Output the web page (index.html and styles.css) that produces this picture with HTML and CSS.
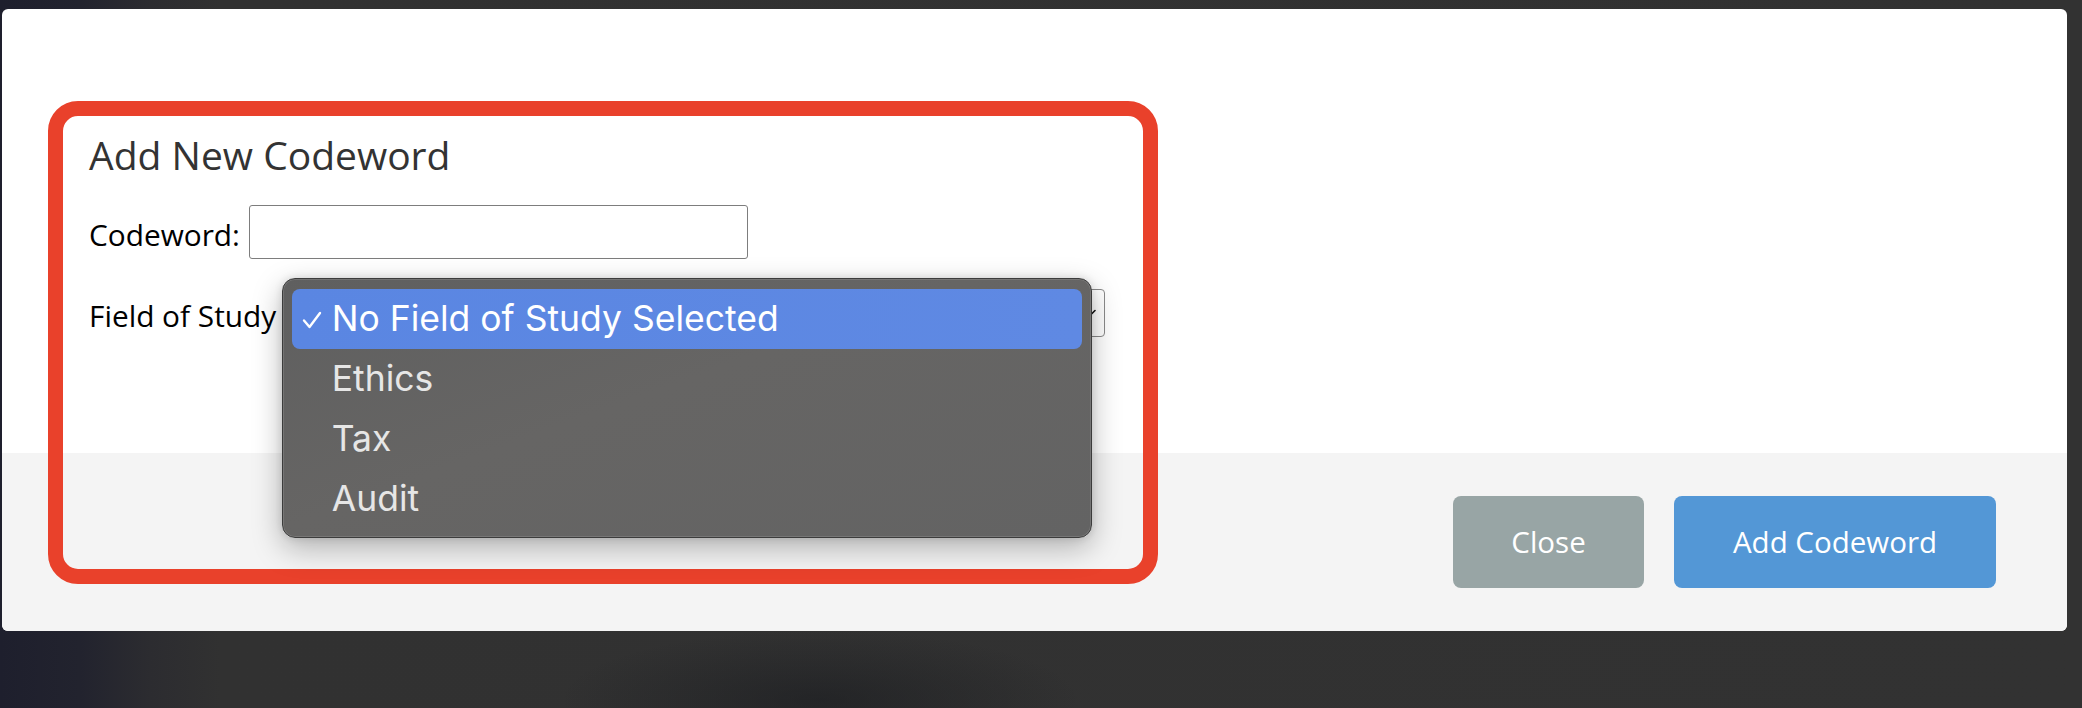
FILE: index.html
```html
<!DOCTYPE html>
<html lang="en">
<head>
<meta charset="utf-8">
<title>Add New Codeword</title>
<link rel="stylesheet" href="styles.css">
</head>
<body>
<div class="page">
  <div class="modal">
    <div class="modal-body">
      <h3 class="title">Add New Codeword</h3>
      <div class="row row-code">
        <label class="label" for="codeword">Codeword:</label>
        <input class="text-input" id="codeword" type="text">
      </div>
      <div class="row row-field">
        <label class="label">Field of Study</label>
        <div class="select">
          <svg class="chevron" width="12" height="8" viewBox="0 0 12 8"><path d="M1 1.5 L6 6.5 L11 1.5" fill="none" stroke="#111" stroke-width="1.6" stroke-linecap="round" stroke-linejoin="round"/></svg>
        </div>
      </div>
    </div>
    <div class="modal-footer">
      <button class="btn btn-close" type="button">Close</button>
      <button class="btn btn-add" type="button">Add Codeword</button>
    </div>

    <div class="annotation"></div>

    <div class="popup">
      <div class="option selected">
        <svg class="check" width="20" height="18" viewBox="0 0 20 18"><path d="M2 9.5 L7.5 16 L18 2" fill="none" stroke="#ffffff" stroke-width="2.4" stroke-linecap="round" stroke-linejoin="round"/></svg>
        <span>No Field of Study Selected</span>
      </div>
      <div class="option"><span>Ethics</span></div>
      <div class="option"><span>Tax</span></div>
      <div class="option"><span>Audit</span></div>
    </div>
  </div>
</div>
</body>
</html>
```

FILE: styles.css
```css
* { box-sizing: border-box; }

html, body {
  margin: 0;
  height: 100%;
}

body {
  background:
    radial-gradient(ellipse 260px 70px at 820px 700px, rgba(24,26,30,0.55), rgba(24,26,30,0) 100%),
    linear-gradient(90deg, #1e1f2d 0px, #22232e 80px, #2c2c30 150px, #313131 220px, #323232 100%);
  font-family: "Open Sans", "Noto Sans", sans-serif;
  overflow: hidden;
}

.page {
  padding: 9px 15px 0 2px;
}

.modal {
  position: relative;
  width: 2065px;
  background: #ffffff;
  border-radius: 6px;
}

.modal-body {
  padding: 121.6px 0 116px 87px;
}

.title {
  margin: 0;
  font-size: 39px;
  line-height: 47px;
  font-weight: 400;
  color: #333333;
}

.row {
  display: flex;
  align-items: center;
}

.row-code {
  margin-top: 27.4px;
  height: 54px;
}

.row-field {
  margin-top: 30px;
  height: 48px;
}

.label {
  font-size: 29.8px;
  line-height: 40px;
  padding-top: 6px;
  color: #000000;
}

.text-input {
  margin-left: 9px;
  width: 499px;
  height: 54px;
  border: 1px solid #7d7d7d;
  border-radius: 3px;
  background: #ffffff;
  font: inherit;
}

.select {
  margin-left: 14px;
  flex: 0 0 815px;
  height: 48px;
  border: 1px solid #8a8a8a;
  border-radius: 4px;
  background: #ffffff;
  display: flex;
  align-items: center;
  justify-content: flex-end;
  padding: 0 8px 0 12px;
}

.modal-footer {
  height: 178px;
  background: #f4f4f4;
  border-radius: 0 0 6px 6px;
  display: flex;
  justify-content: flex-end;
  align-items: center;
  gap: 30px;
  padding-right: 71px;
}

.btn {
  height: 92px;
  padding: 0;
  border: none;
  border-radius: 8px;
  color: #ffffff;
  font-family: "Open Sans", "Noto Sans", sans-serif;
  font-size: 29.5px;
  line-height: 40px;
}

.btn-close {
  width: 191px;
  background: #98a5a5;
}

.btn-add {
  width: 322px;
  background: #5397d6;
}

.annotation {
  position: absolute;
  left: 46px;
  top: 92px;
  width: 1110px;
  height: 483px;
  border: 15px solid #e9412b;
  border-radius: 30px;
  pointer-events: none;
}

.popup {
  position: absolute;
  left: 280px;
  top: 268.5px;
  width: 810px;
  height: 260px;
  padding: 10px 9px;
  border-radius: 13px;
  background: linear-gradient(160deg, #5f5f5f 0%, #666564 45%, #636363 100%);
  border: 1px solid #3c3c3c;
  box-shadow:
    inset 0 0 0 1px rgba(255,255,255,0.12),
    0 10px 30px rgba(0,0,0,0.28),
    0 0 8px rgba(0,0,0,0.12);
  font-family: Inter, "Noto Sans", sans-serif;
}

.option {
  height: 60px;
  display: flex;
  align-items: center;
  padding-left: 39.7px;
  position: relative;
  font-size: 35.5px;
  color: #e6e6e6;
  border-radius: 8px;
}

.option.selected {
  background: linear-gradient(90deg, #5a86e2 0%, #5f89e3 100%);
  color: #ffffff;
}

.check {
  position: absolute;
  left: 10px;
  top: 22px;
}
```
